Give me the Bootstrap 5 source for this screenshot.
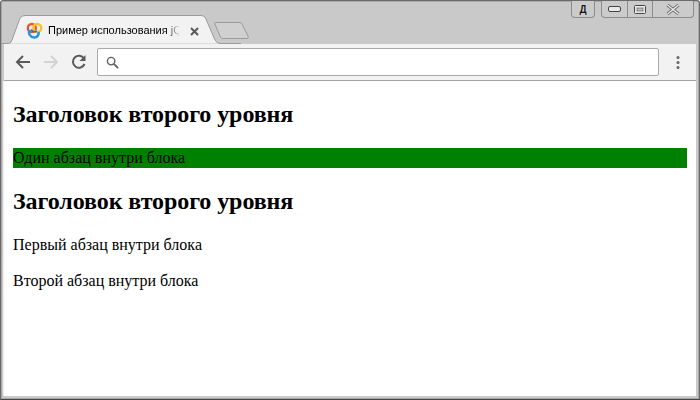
<!DOCTYPE html>
<html lang="ru">
<head>
<meta charset="utf-8">
<title>Пример использования jQuery</title>
<link href="https://cdn.jsdelivr.net/npm/bootstrap@5.3.0/dist/css/bootstrap.min.css" rel="stylesheet">
<style>
html,body{height:400px;overflow:hidden;background:#fff}
.win{width:700px;height:400px;background:#c9c9c9;border:1px solid #6a6a6a;border-bottom-color:#444;border-radius:3px 3px 0 0;box-shadow:inset 0 0 0 1px #a8a8a8}
.strip{height:43px;position:relative;font-family:"Liberation Sans",Arial,sans-serif;padding-left:9px;flex:none}
.tabshape{position:absolute;left:0;top:0}
.tabbody{position:relative;width:205px;height:43px;padding:15px 0 0 16px;font-size:11px;color:#000}
.tabtext{width:134px;white-space:nowrap;margin-left:5px;line-height:29px;height:29px;-webkit-mask-image:linear-gradient(90deg,#000 118px,transparent 132px);mask-image:linear-gradient(90deg,#000 118px,transparent 132px)}
.favi{margin-top:6px;flex:none}
.closex{margin:11px 0 0 8px;flex:none}
.newtab{margin:20px 0 0 -1px;flex:none;position:relative}
.caption{position:absolute;top:0;right:5px;gap:6px}
.capbtn{height:17px;border:1px solid #8c8c8c;border-top:0;background:#cbcbcb;border-radius:0 0 4px 4px;display:flex;align-items:center;justify-content:center}
.capd{width:24px;font-size:10px;font-weight:700;color:#111;text-shadow:0 0 1px #fff}
.capgroup{overflow:hidden}
.capgroup .capseg{height:17px;display:flex;align-items:center;justify-content:center;border-left:1px solid #8c8c8c}
.capgroup .capseg:first-child{border-left:0}
.chromebar{margin:0 3px;height:37px;background:#f2f2f2;border-bottom:1px solid #a5a5a5;padding:0 0 0 11px;flex:none}
.navicons{gap:12px}
.omni{width:562px;height:28px;background:#fff;border:1px solid #a9a9a9;border-radius:2px;margin-left:10px;padding-left:8px;flex:none}
.menu3{margin-left:17px}
.pagearea{height:315px;margin:0 3px;background:#fff;padding:9px 9px 0;font-family:"Liberation Serif","Times New Roman",serif;font-size:16px;color:#000;overflow:hidden;box-shadow:-1px 0 0 #eee}
.pagearea h2{font-family:inherit;font-size:24px;font-weight:700;line-height:28px;letter-spacing:-.08px;margin:18px 0 21px}
.pagearea h2.headfirst{margin:10px 0 20px}
.pagearea p{margin:0 0 18px;line-height:18px}
.pagearea p.greenpara{background:#008000;line-height:20px;height:20px;margin-bottom:19px}
</style>
</head>
<body class="m-0 p-0">
<div class="win d-flex flex-column overflow-hidden">
  <div class="strip d-flex">
    <svg class="tabshape" width="240" height="43" viewBox="0 0 240 43"><path d="M0 42.500H7Q10 42.500 11 39L19 17Q21 14.500 24 14.500H200Q203 14.500 204.500 17L214 39Q215.500 42.500 220 42.500H240" fill="#f2f2f2" stroke="#9a9a9a"/></svg>
    <div class="tabbody d-flex">
      <svg class="favi" width="17" height="17" viewBox="0 0 17 17"><circle cx="5.800" cy="6" r="4" fill="none" stroke="#e9562d" stroke-width="2.400"/><circle cx="11.300" cy="6" r="4" fill="none" stroke="#f7c325" stroke-width="2.400"/><path d="M3.800 8A5 5 0 0 0 8.500 15.500A4.500 4.500 0 0 0 12.500 10" fill="none" stroke="#2a95dc" stroke-width="2.600"/><path d="M5 7.500Q8 11 11 9" fill="none" stroke="#2f6fbd" stroke-width="1.600"/></svg>
      <div class="tabtext">Пример использования jQ</div>
      <svg class="closex" width="9" height="9" viewBox="0 0 9 9"><path d="M1 1L8 8M8 1L1 8" stroke="#5a5a5a" stroke-width="2"/></svg>
    </div>
    <svg class="newtab" width="36" height="20" viewBox="0 0 36 20"><path d="M1.500 1.500H26Q27 1.500 28 3L34 15Q35 17.500 33 17.500H9Q7.500 17.500 6.500 16L.8 3Q.5 1.500 1.500 1.500Z" fill="#d0d0d0" stroke="#9b9b9b"/></svg>
    <div class="caption d-flex">
      <div class="capbtn capd">Д</div>
      <div class="capbtn capgroup">
        <div class="capseg" style="width:25px"><svg width="13" height="6" viewBox="0 0 13 6"><rect x=".5" y=".5" width="12" height="5" rx="1.500" fill="#e9e9e9" stroke="#444"/></svg></div>
        <div class="capseg" style="width:25px"><svg width="12" height="9" viewBox="0 0 12 9"><rect x=".5" y=".5" width="11" height="8" rx="1" fill="#e9e9e9" stroke="#444"/><rect x="3" y="3" width="6" height="3" fill="#bdbdbd" stroke="#555" stroke-width=".6"/></svg></div>
        <div class="capseg" style="width:41px"><svg width="14" height="11" viewBox="0 0 14 11"><path d="M1.500 1L12.500 10M12.500 1L1.500 10" stroke="#666" stroke-width="3"/><path d="M1.500 1L12.500 10M12.500 1L1.500 10" stroke="#f2f2f2" stroke-width="1.200"/></svg></div>
      </div>
    </div>
  </div>
  <div class="chromebar d-flex align-items-center">
    <div class="navicons d-flex align-items-center">
      <svg width="16" height="14" viewBox="0 0 16 14"><path d="M15 7H2M8 1L2 7L8 13" fill="none" stroke="#5a5a5a" stroke-width="2"/></svg>
      <svg width="16" height="14" viewBox="0 0 16 14"><path d="M1 7H14M8 1L14 7L8 13" fill="none" stroke="#d2d2d2" stroke-width="2"/></svg>
      <svg width="16" height="16" viewBox="0 0 16 16"><path d="M13.500 10A6 6 0 1 1 13 4.500" fill="none" stroke="#5a5a5a" stroke-width="2"/><path d="M14.500 1V7H8.500Z" fill="#5a5a5a"/></svg>
    </div>
    <div class="omni d-flex align-items-center"><svg width="13" height="13" viewBox="0 0 14 14"><circle cx="5.500" cy="5.500" r="4" fill="none" stroke="#5f5f5f" stroke-width="1.500"/><path d="M8.500 8.500L13 13" stroke="#5f5f5f" stroke-width="2"/></svg></div>
    <svg class="menu3" width="4" height="13" viewBox="0 0 4 13"><circle cx="2" cy="1.500" r="1.500" fill="#666"/><circle cx="2" cy="6.500" r="1.500" fill="#666"/><circle cx="2" cy="11.500" r="1.500" fill="#666"/></svg>
  </div>
  <div class="pagearea">
    <h2 class="headfirst">Заголовок второго уровня</h2>
    <p class="greenpara">Один абзац внутри блока</p>
    <h2>Заголовок второго уровня</h2>
    <p>Первый абзац внутри блока</p>
    <p>Второй абзац внутри блока</p>
  </div>
</div>
<script src="https://cdn.jsdelivr.net/npm/bootstrap@5.3.0/dist/js/bootstrap.bundle.min.js"></script>
</body>
</html>
